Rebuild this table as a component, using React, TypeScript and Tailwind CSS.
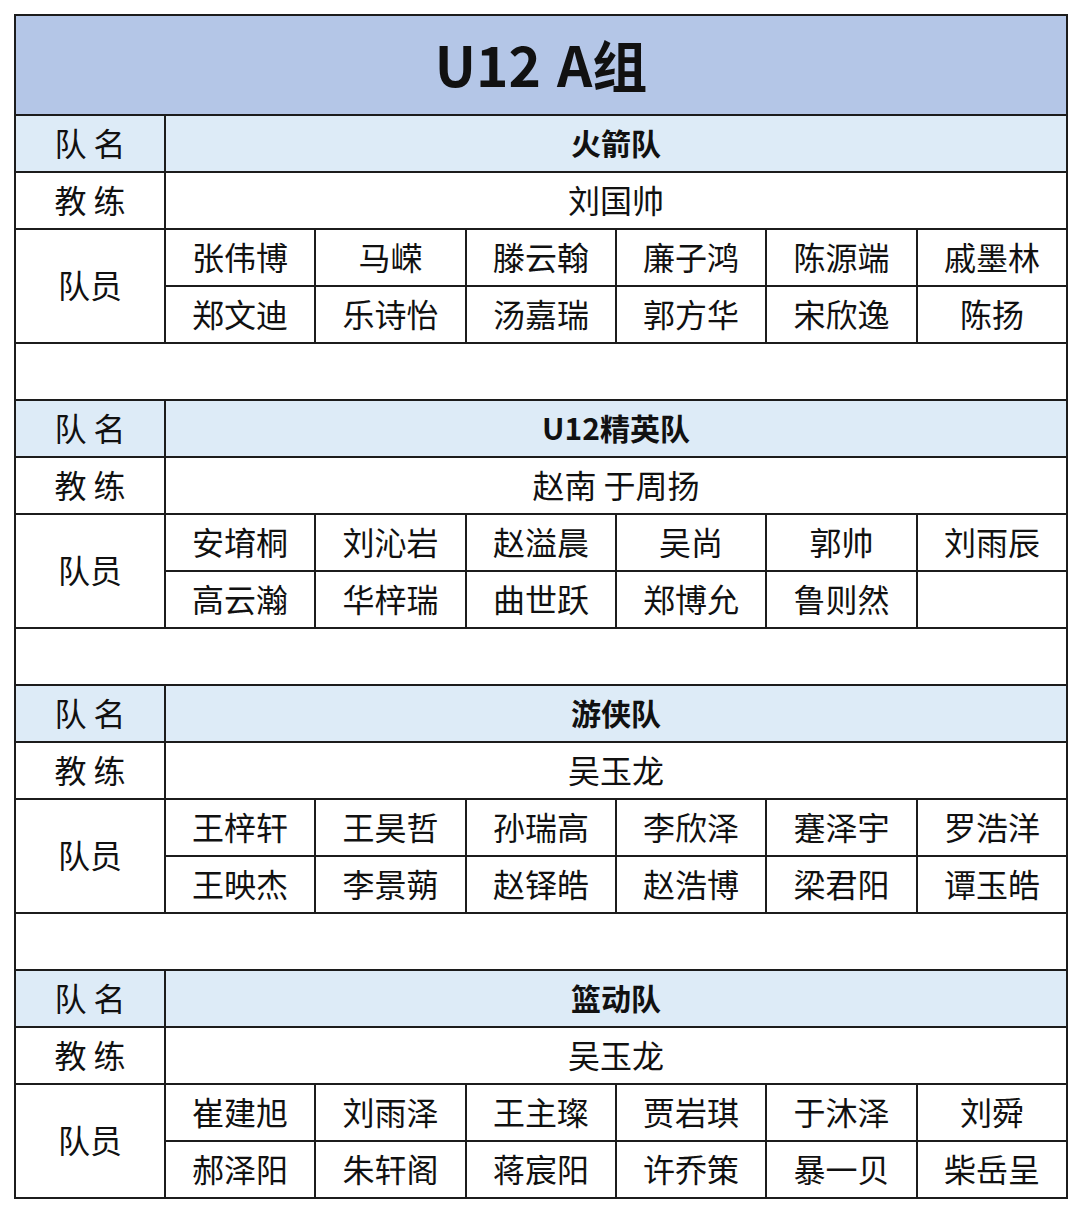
const teams = [
  {
    name: '火箭队',
    coach: '刘国帅',
    players: [
      ['张伟博', '马嵘', '滕云翰', '廉子鸿', '陈源端', '戚墨林'],
      ['郑文迪', '乐诗怡', '汤嘉瑞', '郭方华', '宋欣逸', '陈扬'],
    ],
  },
  {
    name: 'U12精英队',
    coach: '赵南 于周扬',
    players: [
      ['安堉桐', '刘沁岩', '赵溢晨', '吴尚', '郭帅', '刘雨辰'],
      ['高云瀚', '华梓瑞', '曲世跃', '郑博允', '鲁则然', ''],
    ],
  },
  {
    name: '游侠队',
    coach: '吴玉龙',
    players: [
      ['王梓轩', '王昊哲', '孙瑞高', '李欣泽', '蹇泽宇', '罗浩洋'],
      ['王映杰', '李景蒴', '赵铎皓', '赵浩博', '梁君阳', '谭玉皓'],
    ],
  },
  {
    name: '篮动队',
    coach: '吴玉龙',
    players: [
      ['崔建旭', '刘雨泽', '王主璨', '贾岩琪', '于沐泽', '刘舜'],
      ['郝泽阳', '朱轩阁', '蒋宸阳', '许乔策', '暴一贝', '柴岳呈'],
    ],
  },
]

const cell = 'border-2 border-[#1c1c1c] text-center align-middle p-0 pb-[4px]'

function TeamBlock({ team, last }: { team: (typeof teams)[number]; last: boolean }) {
  return (
    <>
      <tr className="h-[57px] bg-[#ddebf7]">
        <td className={cell}>队 名</td>
        <td colSpan={6} className={`${cell} font-bold text-[30px]`}>{team.name}</td>
      </tr>
      <tr className="h-[57px]">
        <td className={cell}>教 练</td>
        <td colSpan={6} className={cell}>{team.coach}</td>
      </tr>
      {team.players.map((row, i) => (
        <tr key={i} className="h-[57px]">
          {i === 0 && (
            <td rowSpan={2} className={cell}>队员</td>
          )}
          {row.map((p, j) => (
            <td key={j} className={cell}>{p}</td>
          ))}
        </tr>
      ))}
      {!last && (
        <tr className="h-[57px]">
          <td colSpan={7} className={cell}></td>
        </tr>
      )}
    </>
  )
}

export default function App() {
  return (
    <div className="w-[1080px] h-[1211px] bg-white pt-[14px] pl-[14px] font-['Noto_Sans_CJK_SC','Noto_Sans',sans-serif] text-[#111] text-[32px] leading-none">
      <table className="w-[1052px] table-fixed border-collapse">
        <colgroup>
          <col className="w-[150px]" />
          <col className="w-[150px]" />
          <col className="w-[151px]" />
          <col className="w-[150px]" />
          <col className="w-[150px]" />
          <col className="w-[151px]" />
          <col className="w-[150px]" />
        </colgroup>
        <tbody>
          <tr className="h-[100px] bg-[#b4c6e7]">
            <td colSpan={7} className={`${cell} text-[55px] font-bold`}>
              U12<span className="inline-block w-[16px]"></span>A组
            </td>
          </tr>
          {teams.map((t, i) => (
            <TeamBlock key={t.name} team={t} last={i === teams.length - 1} />
          ))}
        </tbody>
      </table>
    </div>
  )
}
